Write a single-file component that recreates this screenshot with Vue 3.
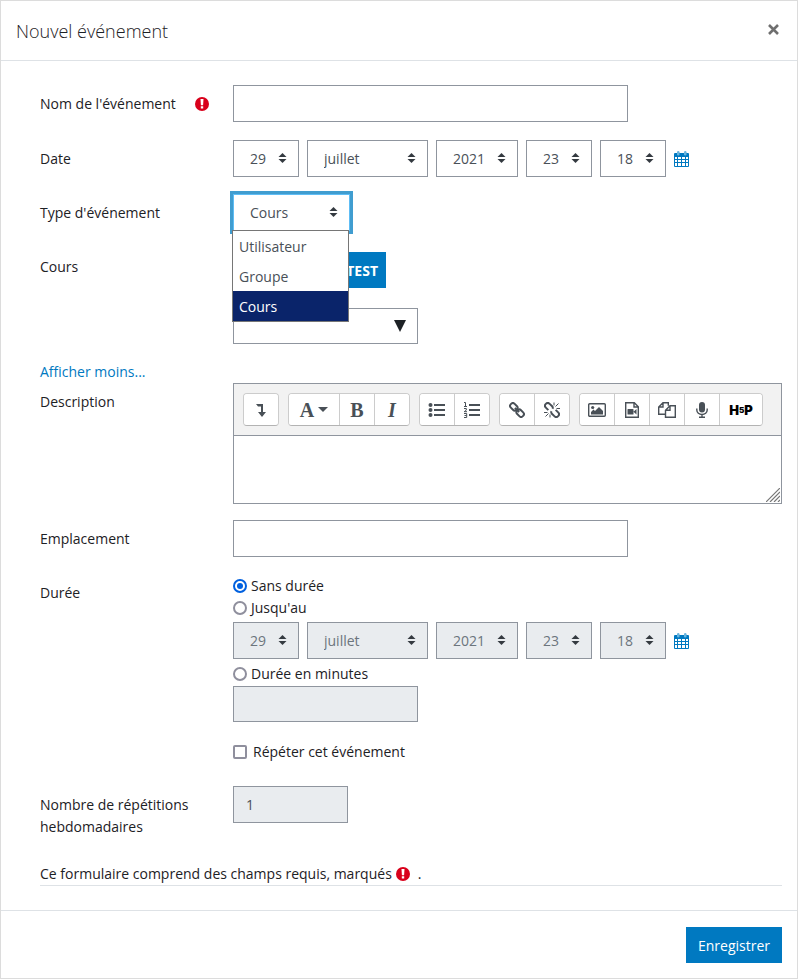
<script setup>
import { ref } from 'vue'

const dateParts = [
  { id: 'day', label: 'Jour', value: '29', size: 'narrow' },
  { id: 'month', label: 'Mois', value: 'juillet', size: 'wide' },
  { id: 'year', label: 'Année', value: '2021', size: 'medium' },
  { id: 'hour', label: 'Heure', value: '23', size: 'narrow' },
  { id: 'minute', label: 'Minute', value: '18', size: 'narrow' },
]

const eventTypes = ['Utilisateur', 'Groupe', 'Cours']
const eventType = ref('Cours')
const menuOpen = ref(true)
const duration = ref('none')
const repeat = ref(false)

function chooseType(type) {
  eventType.value = type
  menuOpen.value = false
}
</script>

<template>
  <svg class="sprite" aria-hidden="true">
    <symbol id="i-sort" viewBox="0 0 8 10">
      <path fill="#343a40" d="M4 0 8 4H0zM4 10 0 6h8z" />
    </symbol>
    <symbol id="i-required" viewBox="0 0 14 14">
      <circle cx="7" cy="7" r="7" fill="#d9001b" />
      <path fill="#fff" d="M5.500 2h3L8.100 8.200H5.900zM5.800 9.300h2.400v2.300H5.800z" />
    </symbol>
    <symbol id="i-calendar" viewBox="0 0 15 16">
      <path fill="#0079c1" fill-rule="evenodd" d="M1 2h13q1 0 1 1v12q0 1-1 1H1q-1 0-1-1V3q0-1 1-1zM1 6v2h2V6zm3 0v2h3V6zm4 0v2h3V6zm4 0v2h2V6zM1 9v2h2V9zm3 0v2h3V9zm4 0v2h3V9zm4 0v2h2V9zM1 12v3h2v-3zm3 0v3h3v-3zm4 0v3h3v-3zm4 0v3h2v-3z" />
      <rect x="3" y="0" width="2.500" height="4.500" rx="1.200" fill="#69b4de" />
      <rect x="10" y="0" width="2.500" height="4.500" rx="1.200" fill="#69b4de" />
    </symbol>
  </svg>

  <form class="modal" aria-labelledby="title" @submit.prevent>
    <header class="modal-header">
      <h1 id="title">Nouvel événement</h1>
      <button type="button" class="close" aria-label="Fermer">
        <svg width="11" height="11" viewBox="0 0 11 11"><path d="M1 1l9 9M10 1l-9 9" stroke="#6f6f6f" stroke-width="2.600" /></svg>
      </button>
    </header>

    <div class="modal-body">
      <div class="row first">
        <div class="label">
          <label for="name">Nom de l'événement</label>
          <svg class="required" role="img" aria-label="Requis"><use href="#i-required" /></svg>
        </div>
        <input id="name" type="text" class="control long">
      </div>

      <div class="row">
        <span class="label">Date</span>
        <div class="dates">
          <span v-for="p in dateParts" :key="p.id" class="select" :class="p.size">
            <select :id="p.id" :aria-label="p.label"><option>{{ p.value }}</option></select>
            <svg class="sort"><use href="#i-sort" /></svg>
          </span>
          <button type="button" class="calendar" aria-label="Calendrier"><svg><use href="#i-calendar" /></svg></button>
        </div>
      </div>

      <div class="row">
        <label class="label" for="type">Type d'événement</label>
        <div class="type">
          <span class="select" :class="{ open: menuOpen }">
            <select id="type" v-model="eventType" @mousedown.prevent="menuOpen = !menuOpen">
              <option v-for="t in eventTypes" :key="t">{{ t }}</option>
            </select>
            <svg class="sort"><use href="#i-sort" /></svg>
          </span>
          <ul v-if="menuOpen" class="menu" role="listbox" aria-label="Type d'événement">
            <li v-for="t in eventTypes" :key="t" role="option" :aria-selected="t === eventType" @click="chooseType(t)">{{ t }}</li>
          </ul>
        </div>
      </div>

      <div class="row">
        <label class="label" for="course">Cours</label>
        <div class="course">
          <span class="tag">TEST</span>
          <div class="combo">
            <input id="course" type="text" class="control">
            <svg class="arrow" viewBox="0 0 12 12"><path d="M0 0h12L6 12z" fill="#1d2125" /></svg>
          </div>
        </div>
      </div>

      <a href="#" class="less">Afficher moins...</a>

      <div class="row tight">
        <label class="label" for="description">Description</label>
        <div class="editor">
          <div class="toolbar" role="toolbar" aria-label="Mise en forme">
            <div class="group">
              <button type="button" aria-label="Afficher plus de boutons">
                <svg width="16" height="16" viewBox="0 0 16 16"><path d="M3 2h7v8h3l-4 5-4-5h3V4.500H5z" /></svg>
              </button>
            </div>
            <div class="group">
              <button type="button" class="style" aria-label="Styles de paragraphe"><span class="letter">A</span>
                <svg width="10" height="5" viewBox="0 0 10 5"><path d="M0 0h10L5 5z" /></svg>
              </button>
              <button type="button" aria-label="Gras"><span class="letter">B</span></button>
              <button type="button" aria-label="Italique"><span class="letter italic">I</span></button>
            </div>
            <div class="group">
              <button type="button" aria-label="Liste non ordonnée">
                <svg width="18" height="16" viewBox="0 0 18 16"><circle cx="2.500" cy="3" r="2" /><circle cx="2.500" cy="8" r="2" /><circle cx="2.500" cy="13" r="2" /><path d="M6 2h11v2H6zM6 7h11v2H6zM6 12h11v2H6z" /></svg>
              </button>
              <button type="button" aria-label="Liste ordonnée">
                <svg width="18" height="16" viewBox="0 0 18 16"><path d="M6 2h11v2H6zM6 7h11v2H6zM6 12h11v2H6z" /><path class="line thin" d="M1 .5h1.500V4M1 4.500h3M1 6.500h2.300v1.600L1.200 9.700H4M1 11.500h2.700v4H1M1.500 13.500h2" /></svg>
              </button>
            </div>
            <div class="group">
              <button type="button" aria-label="Lien">
                <svg width="16" height="16" viewBox="0 0 16 16"><g class="line" transform="rotate(45 8 8)"><rect x="-.5" y="5.300" width="8" height="5.400" rx="2.500" /><rect x="8.500" y="5.300" width="8" height="5.400" rx="2.500" /><path d="M5 8h6" /></g></svg>
              </button>
              <button type="button" aria-label="Supprimer le lien">
                <svg width="16" height="16" viewBox="0 0 16 16"><g class="line" transform="rotate(45 8 8)"><path d="M5.500 10.700H2a2.700 2.700 0 0 1 0-5.400h3.500q1.500 0 2 1.500M10.500 5.300H14a2.700 2.700 0 0 1 0 5.400h-3.500q-1.500 0-2-1.500" /></g><path class="line thin" d="M10 .5v3M11.500 4.500l3-3M12.500 6.500H16M0 10.500h3.500M1.500 14.500l3-3M6 12.500v3" /></svg>
              </button>
            </div>
            <div class="group">
              <button type="button" aria-label="Image">
                <svg width="18" height="16" viewBox="0 0 18 16"><rect class="line mid" x=".7" y="1.700" width="16.600" height="12.600" rx="1" /><circle cx="4.700" cy="5.500" r="1.600" /><path d="M3 12.500V10l2.500-2.500L7 9l4-4 4 4v3.500z" /></svg>
              </button>
              <button type="button" aria-label="Média">
                <svg width="14" height="16" viewBox="0 0 14 16"><path class="line mid" d="M.7.7h8.600l4 4v10.600H.7zM9 .7V5h4.300" /><path d="M3 7h5q.5 0 .5.500V12q0 .5-.5.500H3q-.5 0-.5-.5V7.500Q2.500 7 3 7zM8.500 9.700 11.500 7v5.500z" /></svg>
              </button>
              <button type="button" aria-label="Gérer les fichiers">
                <svg width="18" height="16" viewBox="0 0 18 16"><path class="line mid" d="M7 12.300H.7V5L5 .7h5.300v3M5 .7V5H.7M10.300 15.300h7V3.700H12L7.500 8.200v7.100h3M12 3.700v4.500H7.500" /></svg>
              </button>
              <button type="button" aria-label="Enregistrer du son">
                <svg width="12" height="16" viewBox="0 0 12 16"><rect x="3" y="0" width="6" height="10.500" rx="3" /><path class="line mid" d="M.8 6.500V8a5.200 4.500 0 0 0 10.400 0V6.500M6 12.500V15M3 15.300h6" /></svg>
              </button>
              <button type="button" class="h5p" aria-label="H5P"><span>H</span><small>5</small><span>P</span></button>
            </div>
          </div>
          <textarea id="description"></textarea>
          <svg class="grip" viewBox="0 0 14 14"><path d="M0 14 14 0M4 14 14 4M8 14l6-6M12 14l2-2" stroke="#777" stroke-width="1.200" /></svg>
        </div>
      </div>

      <div class="row">
        <label class="label" for="place">Emplacement</label>
        <input id="place" type="text" class="control long">
      </div>

      <div class="row">
        <span class="label">Durée</span>
        <div class="duration">
          <label class="choice"><input v-model="duration" type="radio" name="duration" value="none">Sans durée</label>
          <label class="choice"><input v-model="duration" type="radio" name="duration" value="until">Jusqu'au</label>
          <div class="dates">
            <span v-for="p in dateParts" :key="p.id" class="select" :class="p.size">
              <select :aria-label="p.label" :disabled="duration !== 'until'"><option>{{ p.value }}</option></select>
              <svg class="sort"><use href="#i-sort" /></svg>
            </span>
            <button type="button" class="calendar" aria-label="Calendrier"><svg><use href="#i-calendar" /></svg></button>
          </div>
          <label class="choice minutes"><input v-model="duration" type="radio" name="duration" value="minutes">Durée en minutes</label>
          <input type="text" class="control short" aria-label="Durée en minutes" :disabled="duration !== 'minutes'">
          <label class="choice repeat"><input v-model="repeat" type="checkbox">Répéter cet événement</label>
        </div>
      </div>

      <div class="row">
        <label class="label" for="repeats">Nombre de répétitions hebdomadaires</label>
        <input id="repeats" type="text" class="control count" value="1" :disabled="!repeat">
      </div>

      <p class="note">Ce formulaire comprend des champs requis, marqués <svg class="required" role="img" aria-label="Champ requis"><use href="#i-required" /></svg> <span>.</span></p>
    </div>

    <footer class="modal-footer">
      <button type="submit" class="save">Enregistrer</button>
    </footer>
  </form>
</template>

<style>
body {
  margin: 0;
  background: #fff;
}
</style>

<style scoped>
* {
  box-sizing: border-box;
}

.sprite {
  position: absolute;
  width: 0;
  height: 0;
}

.modal {
  border: 1px solid #dcdcdc;
  color: #1d2125;
  font: 14px/22px "Open Sans", "Noto Sans", sans-serif;
}

input,
select,
textarea,
button {
  font: inherit;
  margin: 0;
}

svg {
  flex: none;
}

.modal-header {
  display: flex;
  justify-content: space-between;
  align-items: flex-start;
  padding: 15px 15px 13px;
  border-bottom: 1px solid #dee2e6;
}

h1 {
  margin: 0;
  font-size: 18px;
  line-height: 31px;
  font-weight: 300;
}

.close {
  display: flex;
  padding: 8px 3px;
  border: 0;
  background: none;
}

.modal-body {
  padding: 24px 15px 24px 39px;
}

.row {
  display: grid;
  grid-template-columns: 193px minmax(0, 1fr);
  margin-bottom: 17px;
}

.row.first {
  margin-bottom: 18px;
}

.row.tight {
  margin-bottom: 16px;
}

.label {
  padding: 8px 24px 0 0;
}

div.label {
  display: flex;
  justify-content: space-between;
  align-items: center;
  padding-bottom: 7px;
}

.required {
  width: 14px;
  height: 14px;
}

.control,
.select select {
  width: 100%;
  height: 37px;
  padding: 0 12px;
  border: 1px solid #8f959e;
  border-radius: 0;
  background: #fff;
  color: #495057;
}

.control.long {
  max-width: 395px;
}

.control.count {
  max-width: 115px;
}

.control:disabled,
.select select:disabled {
  background: #e9ecef;
  opacity: 1;
}

.select select:disabled {
  color: #6c757d;
}

.dates {
  display: flex;
  align-items: center;
  gap: 8px;
}

.select {
  position: relative;
  display: block;
}

.select select {
  display: block;
  appearance: none;
  padding: 0 16px;
}

.narrow {
  width: 66px;
}

.medium {
  width: 82px;
}

.wide {
  width: 121px;
}

.sort {
  position: absolute;
  top: 13px;
  right: 12px;
  width: 9px;
  height: 10px;
  pointer-events: none;
}

.calendar {
  display: flex;
  padding: 0;
  border: 0;
  background: none;
}

.calendar svg {
  width: 15px;
  height: 16px;
}

.type {
  position: relative;
  width: 117px;
}

.open select {
  border-color: #5ebdf5;
  outline: 3px solid #409dd0;
}

.menu {
  position: absolute;
  z-index: 2;
  top: 36px;
  left: -1px;
  width: 117px;
  margin: 0;
  padding: 0;
  border: 1px solid #767676;
  background: #fff;
  color: #495057;
  list-style: none;
}

.menu li {
  padding: 5px 6px 3px;
}

.menu li[aria-selected="true"] {
  background: #0a246a;
  color: #fff;
}

.course {
  display: flex;
  flex-direction: column;
  align-items: flex-start;
  gap: 20px;
  padding-top: 4px;
}

.tag {
  min-width: 153px;
  padding: 8px 8px 6px;
  background: #0079c1;
  color: #fff;
  font-weight: 700;
  text-align: right;
}

.combo {
  position: relative;
  width: 185px;
}

.combo .control,
.control.short {
  display: block;
  max-width: 185px;
  height: 36px;
}

.arrow {
  position: absolute;
  top: 12px;
  right: 12px;
  width: 12px;
  height: 12px;
  pointer-events: none;
}

.less {
  display: block;
  color: #0079c1;
  text-decoration: none;
}

.editor {
  position: relative;
  border: 1px solid #8f959e;
}

.toolbar {
  display: flex;
  flex-wrap: wrap;
  gap: 9px;
  padding: 9px;
  border-bottom: 1px solid #8f959e;
  background: #f2f2f2;
}

.group {
  display: flex;
  overflow: hidden;
  border: 1px solid #ccc;
  border-bottom-color: #b3b3b3;
  border-radius: 4px;
  background: #fff;
}

.group button {
  display: flex;
  align-items: center;
  justify-content: center;
  width: 35px;
  height: 31px;
  padding: 0;
  border: 0;
  border-left: 1px solid #ccc;
  background: #fff;
  color: #495057;
}

.group button:first-child {
  width: 34px;
  border-left: 0;
}

.group .style:first-child {
  gap: 4px;
  width: 50px;
}

.group button.h5p {
  width: 43px;
  color: #000;
  font: 900 13px/16px Inter, sans-serif;
}

.h5p small {
  font-size: 8px;
}

.group svg {
  fill: #495057;
}

.line {
  fill: none;
  stroke: #495057;
  stroke-width: 2;
}

.line.mid {
  stroke-width: 1.400px;
}

.line.thin {
  stroke-width: 1px;
}

.letter {
  font: 700 20px/20px "Liberation Serif", serif;
}

.italic {
  font-style: italic;
}

textarea {
  display: block;
  width: 100%;
  height: 67px;
  padding: 8px 12px;
  border: 0;
  resize: none;
}

.grip {
  position: absolute;
  right: 1px;
  bottom: 1px;
  width: 14px;
  height: 14px;
}

.duration {
  padding-top: 1px;
}

.choice {
  display: flex;
  align-items: center;
  gap: 4px;
}

.duration .dates {
  padding: 3px 0 4px;
}

.control.short {
  margin-top: 1px;
}

.choice input {
  display: grid;
  place-items: center;
  appearance: none;
  width: 14px;
  height: 14px;
  border: 2px solid #8f8f9d;
  border-radius: 2px;
  background: #fff;
}

.choice input[type="radio"] {
  border-radius: 50%;
}

.choice input:checked {
  border-color: #0060df;
}

.choice input:checked::before {
  content: "";
  width: 6px;
  height: 6px;
  border-radius: 50%;
  background: #0060df;
}

.repeat {
  gap: 6px;
  padding: 19px 0 6px;
}

.note {
  display: flex;
  align-items: center;
  gap: 4px;
  margin: 25px 0 0;
  border-bottom: 1px solid #dee2e6;
}

.note span {
  padding-left: 4px;
}

.modal-footer {
  display: flex;
  justify-content: flex-end;
  padding: 16px 15px 15px;
  border-top: 1px solid #dee2e6;
}

.save {
  padding: 8px 12px 6px;
  border: 0;
  background: #0079c1;
  color: #fff;
}
</style>
